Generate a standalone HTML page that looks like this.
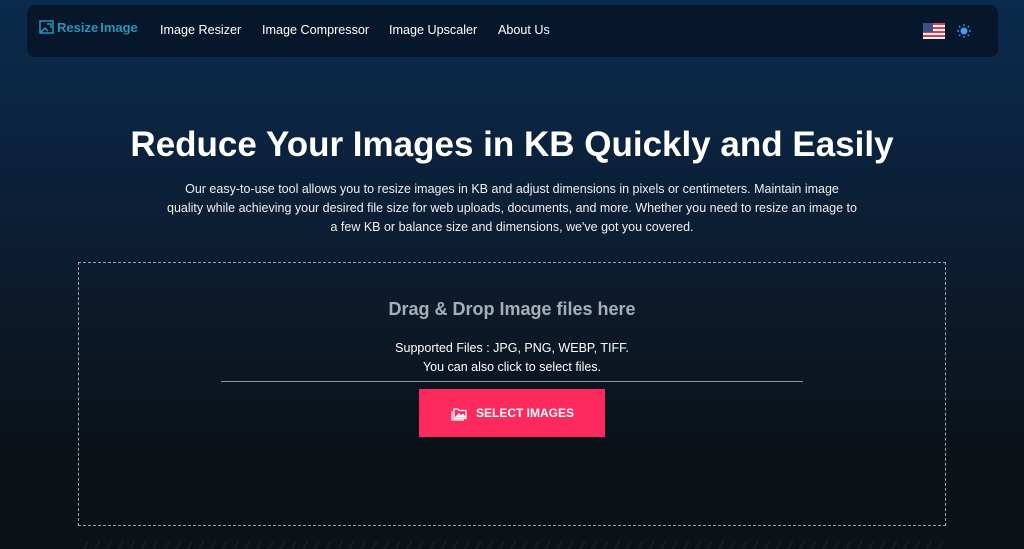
<!DOCTYPE html>
<html><head><meta charset="utf-8"><style>
*{margin:0;padding:0;box-sizing:border-box}
body{width:1024px;height:549px;overflow:hidden;font-family:"Liberation Sans",sans-serif;background:linear-gradient(180deg,#0b2b4c 0px,#0b2440 120px,#0c1a2b 300px,#0b1218 450px,#0b1117 549px);color:#fff;position:relative}
.nav{position:absolute;left:27px;top:5px;width:971px;height:52px;background:#07172b;border-radius:8px}
.logo{position:absolute;left:12px;top:15px;font-weight:bold;font-size:13px;color:#2a93b8;display:flex;align-items:center;gap:2px}
.nav a{position:absolute;top:18px;font-size:12.6px;color:#fff}
h1{position:absolute;top:125px;width:100%;text-align:center;font-size:35px;font-weight:bold}
.p{position:absolute;top:180px;left:167px;width:690px;text-align:center;font-size:12.5px;line-height:19px;color:#f0f0f0}
.drop{position:absolute;left:78px;top:262px;width:868px;height:264px;border:1px dashed #9aa3ad}
.dt{position:absolute;top:299px;width:100%;text-align:center;font-size:18px;font-weight:bold;color:#a8aeb5}
.s{position:absolute;top:339px;width:100%;text-align:center;font-size:12.5px;line-height:19px}
.line{position:absolute;left:221px;top:381px;width:582px;height:1px;background:#8b939b}
.btn{position:absolute;left:419px;top:389px;width:186px;height:48px;background:#fe2a5d;display:flex;align-items:center;justify-content:center;gap:8px;font-weight:bold;font-size:12px}
.hatch{position:absolute;left:78px;top:541px;width:868px;height:8px;background:repeating-linear-gradient(120deg,transparent 0 8px,#161d26 8px 10px)}
</style></head><body>
<div class="nav">
 <div class="logo"><svg width="16" height="15" viewBox="0 0 16 15" fill="none" stroke="#2a93b8" stroke-width="1.5"><rect x="1" y="1" width="13" height="12"/><path d="M1 13 L6 8 L9 11 M8 4h4v4"/></svg>Resize<span style="color:#2a93b8">Image</span></div>
 <a style="left:133px">Image Resizer</a>
 <a style="left:235px">Image Compressor</a>
 <a style="left:362px">Image Upscaler</a>
 <a style="left:471px">About Us</a>
 <svg style="position:absolute;left:896px;top:18px" width="22" height="16" viewBox="0 0 22 16"><rect width="22" height="16" fill="#f4f4f4"/><g fill="#d8404f"><rect y="0" width="22" height="2"/><rect y="4" width="22" height="2"/><rect y="8" width="22" height="2"/><rect y="12" width="22" height="2"/></g><rect width="10" height="9" fill="#3c4f8a"/></svg>
 <svg style="position:absolute;left:930px;top:19px" width="14" height="14" viewBox="0 0 14 14" fill="#3d9cf0"><circle cx="7" cy="7" r="3.5"/><g stroke="#3d9cf0" stroke-width="1.2"><path d="M7 0v2M7 12v2M0 7h2M12 7h2M2 2l1.3 1.3M10.7 10.7L12 12M2 12l1.3-1.3M10.7 3.3L12 2"/></g></svg>
</div>
<h1>Reduce Your Images in KB Quickly and Easily</h1>
<div class="p">Our easy-to-use tool allows you to resize images in KB and adjust dimensions in pixels or centimeters. Maintain image quality while achieving your desired file size for web uploads, documents, and more. Whether you need to resize an image to a few KB or balance size and dimensions, we've got you covered.</div>
<div class="drop"></div>
<div class="dt">Drag &amp; Drop Image files here</div>
<div class="s">Supported Files : JPG, PNG, WEBP, TIFF.<br>You can also click to select files.</div>
<div class="line"></div>
<div class="btn"><svg width="18" height="15" viewBox="0 0 18 15" fill="none" stroke="#fff" stroke-width="1.3"><path d="M4 3h4l1 1.5h7v8H4z"/><path d="M2 5v9h12"/><path d="M6 11l3-3 2 2 2-1.5 2 2.5z" fill="#fff"/></svg>SELECT IMAGES</div>
<div class="hatch"></div>
</body></html>
